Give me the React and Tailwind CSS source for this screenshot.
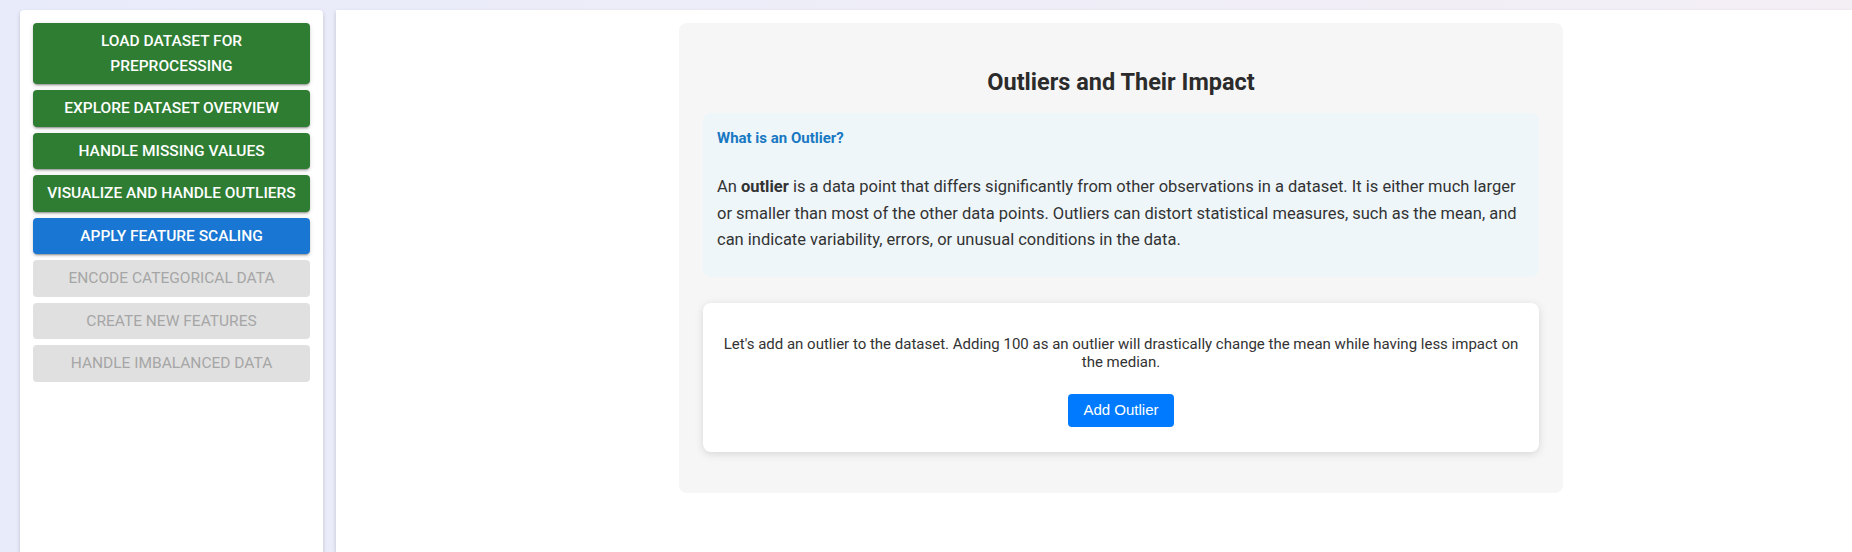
import React from 'react';

const steps = [
  { label: 'Load Dataset for Preprocessing', state: 'done' },
  { label: 'Explore Dataset Overview', state: 'done' },
  { label: 'Handle Missing Values', state: 'done' },
  { label: 'Visualize and Handle Outliers', state: 'done' },
  { label: 'Apply Feature Scaling', state: 'active' },
  { label: 'Encode Categorical Data', state: 'locked' },
  { label: 'Create New Features', state: 'locked' },
  { label: 'Handle Imbalanced Data', state: 'locked' },
];

const stepStyles = {
  done: 'bg-[#2e7d32] text-white font-medium shadow-[0_3px_1px_-2px_rgba(0,0,0,0.2),0_2px_2px_0_rgba(0,0,0,0.14),0_1px_5px_0_rgba(0,0,0,0.12)]',
  active: 'bg-[#1976d2] text-white font-medium shadow-[0_3px_1px_-2px_rgba(0,0,0,0.2),0_2px_2px_0_rgba(0,0,0,0.14),0_1px_5px_0_rgba(0,0,0,0.12)]',
  locked: 'bg-[#e0e0e0] text-[#a6a6a6] font-normal',
};

function StepButton({ label, state }) {
  return (
    <button
      className={`w-full rounded-[4px] px-[10px] py-[6px] text-[15.5px] uppercase leading-[24.5px] ${stepStyles[state]}`}
    >
      {label}
    </button>
  );
}

export default function App() {
  return (
    <div
      className="flex h-screen gap-[13px] overflow-hidden bg-gradient-to-r from-[#e8ebfa] to-[#f4eff5] pl-[20px] pt-[10px]"
      style={{ fontFamily: 'Roboto, "Noto Sans", sans-serif' }}
    >
      {/* Sidebar with steps */}
      <aside className="flex w-[303px] shrink-0 flex-col gap-[6px] rounded-t-[4px] bg-white px-[13px] pt-[13px] shadow-[0_2px_4px_rgba(0,0,0,0.18)]">
        {steps.map((s) => (
          <StepButton key={s.label} {...s} />
        ))}
      </aside>

      {/* Main area */}
      <main className="flex-1 bg-white pt-[13px] shadow-[0_2px_4px_rgba(0,0,0,0.18)]">
        <div className="ml-[343px] w-[884px] rounded-[8px] bg-[#f6f6f6] px-[24px] pb-[41px] pt-[24px] text-[#333]">
          <h2 className="mb-[16px] mt-[20px] text-center text-[23.5px] font-bold leading-[30px] text-[#2b2b2b]">
            Outliers and Their Impact
          </h2>

          <div className="rounded-[8px] bg-[#eef6fa] pb-[23px] pl-[14px] pr-[14px] pt-[16px]">
            <h3 className="text-[15px] font-bold leading-[18px] text-[#1878c2]">What is an Outlier?</h3>
            <p className="mt-[27px] text-[16.5px] leading-[26.5px] text-[#333]">
              An <strong>outlier</strong> is a data point that differs significantly from other observations in a
              dataset. It is either much larger or smaller than most of the other data points. Outliers can distort
              statistical measures, such as the mean, and can indicate variability, errors, or unusual conditions in
              the data.
            </p>
          </div>

          <div className="mt-[26px] flex flex-col items-center rounded-[8px] bg-white px-[20px] pb-[25px] pt-[32px] shadow-[0_2px_8px_rgba(0,0,0,0.13)]">
            <p className="text-center text-[15px] leading-[18px] text-[#333]">
              Let's add an outlier to the dataset. Adding 100 as an outlier will drastically change the mean while
              having less impact on the median.
            </p>
            <button
              className="mt-[23px] h-[33px] rounded-[4px] bg-[#007bff] px-[15px] text-[15px] text-white"
              style={{ fontFamily: '"Liberation Sans", Arial, sans-serif' }}
            >
              Add Outlier
            </button>
          </div>
        </div>
      </main>
    </div>
  );
}
